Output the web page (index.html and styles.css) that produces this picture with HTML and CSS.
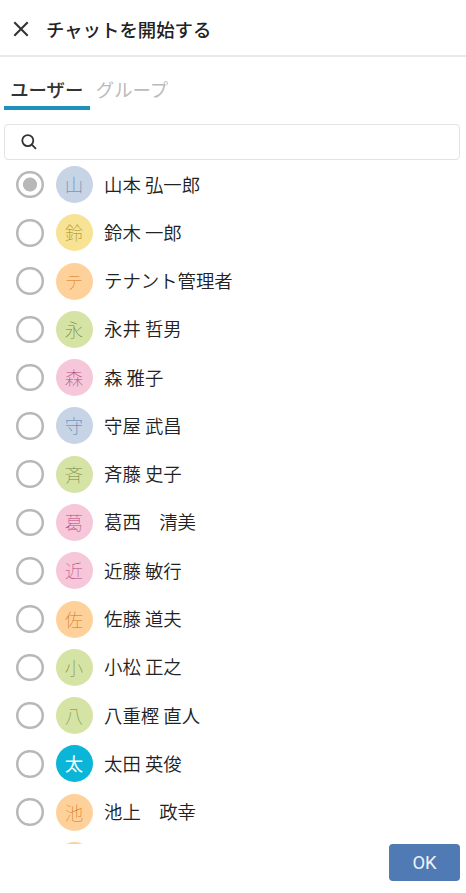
FILE: index.html
```
<!DOCTYPE html>
<html lang="ja">
<head>
	<meta charset="utf-8">
	<title>チャットを開始する</title>
	<link rel="stylesheet" href="styles.css">
</head>
<body>
	<div class="header">
		<svg class="close" viewBox="0 0 16 16"><path d="M1.3 1.3L14.7 14.7M14.7 1.3L1.3 14.7"/></svg>
		<h1 class="title">チャットを開始する</h1>
	</div>
	<div class="tabs">
		<div class="tab active">ユーザー</div>
		<div class="tab">グループ</div>
	</div>
	<div class="search">
		<svg class="search-icon" viewBox="0 0 16 16"><circle cx="6.8" cy="6.6" r="5.5"/><path d="M10.8 10.6L15 14.9"/></svg>
	</div>
	<div class="list">
		<div class="row"><span class="radio checked"></span><span class="avatar blue">山</span><span class="name">山本 弘一郎</span></div>
		<div class="row"><span class="radio"></span><span class="avatar yellow">鈴</span><span class="name">鈴木 一郎</span></div>
		<div class="row"><span class="radio"></span><span class="avatar orange">テ</span><span class="name">テナント管理者</span></div>
		<div class="row"><span class="radio"></span><span class="avatar green">永</span><span class="name">永井 哲男</span></div>
		<div class="row"><span class="radio"></span><span class="avatar pink">森</span><span class="name">森 雅子</span></div>
		<div class="row"><span class="radio"></span><span class="avatar blue">守</span><span class="name">守屋 武昌</span></div>
		<div class="row"><span class="radio"></span><span class="avatar green">斉</span><span class="name">斉藤 史子</span></div>
		<div class="row"><span class="radio"></span><span class="avatar pink">葛</span><span class="name">葛西　清美</span></div>
		<div class="row"><span class="radio"></span><span class="avatar pink">近</span><span class="name">近藤 敏行</span></div>
		<div class="row"><span class="radio"></span><span class="avatar orange">佐</span><span class="name">佐藤 道夫</span></div>
		<div class="row"><span class="radio"></span><span class="avatar green">小</span><span class="name">小松 正之</span></div>
		<div class="row"><span class="radio"></span><span class="avatar green">八</span><span class="name">八重樫 直人</span></div>
		<div class="row"><span class="radio"></span><span class="avatar cyan">太</span><span class="name">太田 英俊</span></div>
		<div class="row"><span class="radio"></span><span class="avatar orange">池</span><span class="name">池上　政幸</span></div>
		<div class="row"><span class="radio"></span><span class="avatar orange"></span></div>
	</div>
	<div class="footer">
		<button class="ok">OK</button>
	</div>
</body>
</html>
```

FILE: styles.css
```
* {
	box-sizing: border-box;
}
body {
	margin: 0;
	height: 893px;
	overflow: hidden;
	display: flex;
	flex-direction: column;
	background: #fff;
	color: #222;
	font-family: "Noto Sans CJK JP", sans-serif;
	font-size: 18.4px;
}
.header {
	height: 57px;
	flex: none;
	display: flex;
	align-items: center;
	padding: 2px 0 0 12.5px;
	border-bottom: 2px solid #e8e8e8;
}
.close {
	width: 16px;
	height: 16px;
	margin: 1px 17.5px 0 0;
	fill: none;
	stroke: #333;
	stroke-width: 2.1;
}
.title {
	margin: 0;
	font-size: 18.4px;
	font-weight: 500;
	line-height: 28px;
}
.tabs {
	height: 67px;
	flex: none;
	display: flex;
	align-items: flex-start;
	padding: 18px 0 0 4px;
}
.tab {
	height: 35px;
	padding: 0 6.2px;
	line-height: 29px;
	color: #bbb;
}
.tab.active {
	color: #333;
	font-weight: 500;
	border-bottom: 4px solid #1f8fbb;
}
.search {
	height: 36px;
	flex: none;
	margin: 0 6px 0 4px;
	padding-left: 15.5px;
	display: flex;
	align-items: center;
	border: 1px solid #e3e3e3;
	border-radius: 4px;
}
.search-icon {
	width: 16px;
	height: 16px;
	fill: none;
	stroke: #333;
	stroke-width: 1.8;
}
.list {
	height: 683.5px;
	flex: none;
	overflow: hidden;
	padding-top: 0.5px;
}
.row {
	height: 48.28px;
	display: flex;
	align-items: center;
	padding-left: 16px;
}
.radio {
	width: 27.5px;
	height: 27.5px;
	flex: none;
	margin-right: 12px;
	box-shadow: inset 0 0 0 2.5px #b8b8b8;
	border-radius: 50%;
}
.radio.checked {
	background: radial-gradient(circle, #b8b8b8 6.6px, transparent 7.4px);
}
.avatar {
	width: 37px;
	height: 37px;
	flex: none;
	margin-right: 11.5px;
	border-radius: 50%;
	line-height: 37px;
	text-align: center;
	font-weight: 100;
}
.name {
	line-height: 28px;
	padding-bottom: 2px;
	font-weight: 350;
}
.blue {
	background: #c6d4e6;
	color: #4f79b3;
}
.yellow {
	background: #f8e293;
	color: #a08c1c;
}
.orange {
	background: #ffd19a;
	color: #d07818;
}
.green {
	background: #d5e3a5;
	color: #72883a;
}
.pink {
	background: #f6c7d9;
	color: #b84880;
}
.cyan {
	background: #0bb5d7;
	color: #fff;
	font-weight: 400;
}
.footer {
	display: flex;
	justify-content: flex-end;
	padding: 0.5px 6px 0 0;
}
.ok {
	width: 71px;
	height: 37px;
	padding: 0;
	border: 0;
	border-radius: 4px;
	background: #507ab3;
	color: #eef3fa;
	font-family: Roboto, sans-serif;
	font-size: 18.4px;
}
```
